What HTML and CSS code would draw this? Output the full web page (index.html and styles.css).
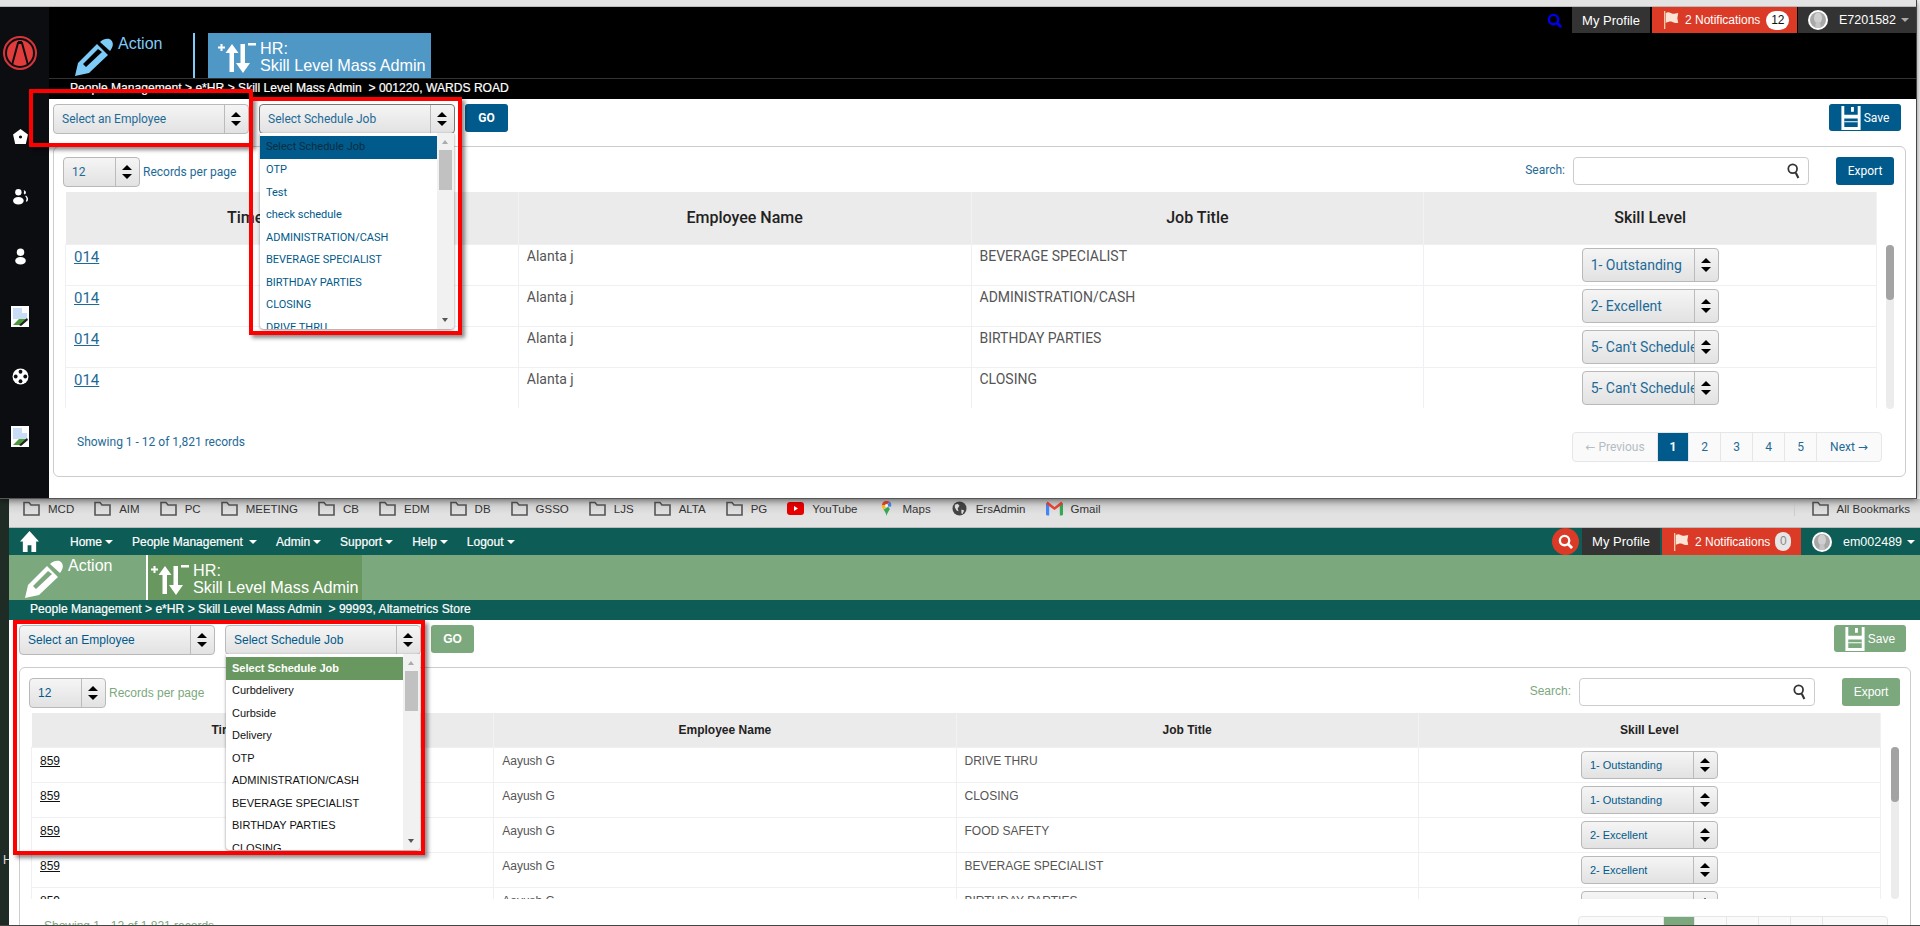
FILE: index.html
```html
<!DOCTYPE html>
<html lang="en">
<head>
    <meta charset="UTF-8">
    <meta name="viewport" content="width=device-width, initial-scale=1.0">
    <title>Skill Level Mass Admin</title>
    <link rel="stylesheet" href="styles.css">
</head>
<body>
    <!-- Shared icons -->
    <svg class="sprite" width="0" height="0">
        <symbol id="i-pencil" viewBox="0 0 38 38"><path fill-rule="evenodd" d="M0 38 3 25 22 6 33 17 14 35ZM8 26 11 29 27 14 23 11Z"/><path d="M25 4C29 0 34 0 36 2 39 5 38 9 35 13Z"/></symbol>
        <symbol id="i-updown" viewBox="0 0 38 30"><path d="M2.500 1h2v2.500H7v2H4.500V8h-2V5.500H0v-2h2.500ZM14 1l6.500 9H16v19h-4.500V10H7.500ZM22.500 1H27v19h5l-7 10-7-10h4.500ZM30 0h8v2.500h-8Z"/></symbol>
        <symbol id="i-floppy" viewBox="0 0 20 25"><path class="floppy-body" d="M0 0h20v25H0Z"/><path class="floppy-cut" d="M3 0h14v9H3ZM3 13h14v9H3Z"/><path class="floppy-body" d="M10 1h3v5h-3ZM3 16h14v1H3Z"/></symbol>
        <symbol id="i-flag" viewBox="0 0 18 20"><path fill="#f3c9a8" d="M0 0h1.500v20H0Z"/><path fill="#fbe3d6" d="M2 2c4-2 6 1 8 1s4-1 6-1l-1 6 1 5c-3 1-5 0-7-1s-4 0-7 1Z"/></symbol>
        <symbol id="i-avatar" viewBox="0 0 20 20"><circle cx="10" cy="10" r="10" fill="#fff"/><circle cx="10" cy="10" r="8" fill="#a8a8a8"/><ellipse cx="10" cy="8" rx="4" ry="5.500" fill="#cfcfcf"/><path fill="#c4c4c4" d="M8 12h4l1 6H7Z"/></symbol>
        <symbol id="i-folder" viewBox="0 0 17 15"><path fill="none" stroke="#555" stroke-width="1.600" d="M1 1.500h5l2 2.500h8v10H1Z"/></symbol>
        <symbol id="i-broken" viewBox="0 0 18 21"><path fill="#fff" d="M0 0h18v21H0Z"/><path fill="#c9ddf6" d="M2 2h9l5 5v6H2Z"/><path fill="#4c9a3a" d="M2 19l6-6h8l-5 6Z"/><path fill="#fff" d="M11 1 17 7h-6Z"/><path fill="#222" d="M16 12l1 2-7 6-2-1Z"/></symbol>
        <symbol id="i-lens" viewBox="0 0 16 18"><circle cx="6.500" cy="6.500" r="5" fill="none" stroke="currentColor" stroke-width="2"/><path fill="none" stroke="currentColor" stroke-width="2.400" d="M10 11l3 6"/></symbol>
    </svg>

    <!-- Top window: blue theme -->
    <div class="win-top">
        <div class="chrome-strip"></div>
        <div class="win-body">
            <div class="sidebar">
                <svg class="logo" viewBox="0 0 34 34"><circle cx="17" cy="17" r="16" fill="#0b0d11" stroke="#d8353a" stroke-width="2"/><circle cx="17" cy="17" r="13" fill="#e23c3c"/><path fill="none" stroke="#0b0d11" stroke-width="2" d="M9 29 15 7h4l6 22"/><path fill="#0b0d11" d="M15 5h4v3h-4Z"/></svg>
                <ul class="side-icons">
                    <li><svg viewBox="0 0 16 16"><path fill="#fff" fill-rule="evenodd" d="M8 1 15 6 13 15H3L1 6ZM8 7a1.500 1.500 0 1 0 .01 0Z"/></svg></li>
                    <li><svg viewBox="0 0 16 16"><circle cx="6" cy="4" r="3" fill="#fff"/><ellipse cx="6" cy="12" rx="5" ry="3.500" fill="#fff"/><path fill="#fff" d="M11 2c2 0 3 3 1 4l-1-1c.500-1 .500-2 0-3ZM13 7c2 1 3 4 1 6l-1-.500c1-2 1-3-.500-4.500Z"/></svg></li>
                    <li><svg viewBox="0 0 16 16"><circle cx="8" cy="4" r="3.500" fill="#fff"/><ellipse cx="8" cy="12" rx="5" ry="3.500" fill="#fff"/></svg></li>
                    <li><svg class="side-broken"><use href="#i-broken"/></svg></li>
                    <li><svg viewBox="0 0 16 16"><circle cx="8" cy="8" r="7.500" fill="#fff"/><circle cx="8" cy="3.500" r="1.800" fill="#0b0d11"/><circle cx="8" cy="12.500" r="1.800" fill="#0b0d11"/><circle cx="3.500" cy="8" r="1.800" fill="#0b0d11"/><circle cx="12.500" cy="8" r="1.800" fill="#0b0d11"/></svg></li>
                    <li><svg class="side-broken"><use href="#i-broken"/></svg></li>
                </ul>
            </div>
            <div class="main">
                <div class="head-top">
                    <div class="title-group">
                        <div class="action-box">
                            <svg class="pencil"><use href="#i-pencil"/></svg>
                            <span>Action</span>
                        </div>
                        <div class="hr-tile">
                            <svg class="updown"><use href="#i-updown"/></svg>
                            <div class="hr-text">HR:<br>Skill Level Mass Admin</div>
                        </div>
                    </div>
                    <div class="user-nav">
                        <span class="nav-search"><svg viewBox="0 0 16 16"><circle cx="7" cy="7" r="5" fill="none" stroke="currentColor" stroke-width="2.500"/><path stroke="currentColor" stroke-width="3" d="M10.500 10.500 15 15"/></svg></span>
                        <span class="nav-tab profile">My Profile</span>
                        <span class="nav-tab notif"><svg class="flag"><use href="#i-flag"/></svg>2 Notifications <b class="badge">12</b></span>
                        <span class="nav-tab user"><svg class="avatar"><use href="#i-avatar"/></svg>E7201582<i class="caret"></i></span>
                    </div>
                </div>
                <div class="crumb">People Management &gt; e*HR &gt; Skill Level Mass Admin &nbsp;&gt; 001220, WARDS ROAD</div>
                <div class="content">
                    <div class="filter-row">
                        <div class="sel sel-filter"><span>Select an Employee</span><i class="arrows"></i></div>
                        <div class="sel sel-filter sel-open">
                            <span>Select Schedule Job</span><i class="arrows"></i>
                            <div class="drop">
                                <ul class="drop-list">
                                    <li class="on">Select Schedule Job</li>
                                    <li>OTP</li>
                                    <li>Test</li>
                                    <li>check schedule</li>
                                    <li>ADMINISTRATION/CASH</li>
                                    <li>BEVERAGE SPECIALIST</li>
                                    <li>BIRTHDAY PARTIES</li>
                                    <li>CLOSING</li>
                                    <li>DRIVE THRU</li>
                                </ul>
                                <div class="drop-scroll"><i class="up"></i><b></b><i class="down"></i></div>
                            </div>
                        </div>
                        <span class="btn btn-go">GO</span>
                        <span class="btn btn-save"><svg class="floppy"><use href="#i-floppy"/></svg>Save</span>
                    </div>
                    <div class="card">
                        <div class="toolbar">
                            <div class="sel sel-small"><span>12</span><i class="arrows"></i></div>
                            <span class="per-page">Records per page</span>
                            <span class="search-label">Search:</span>
                            <div class="search-box"><svg class="lens"><use href="#i-lens"/></svg></div>
                            <span class="btn btn-export">Export</span>
                        </div>
                        <div class="table-row">
                            <div class="table-wrap">
                                <table class="grid">
                                    <thead><tr><th>Timecard Number</th><th>Employee Name</th><th>Job Title</th><th>Skill Level</th></tr></thead>
                                    <tbody>
                                        <tr><td><a href="#">014</a></td><td>Alanta j</td><td>BEVERAGE SPECIALIST</td><td class="skill"><div class="sel sel-skill"><span>1- Outstanding</span><i class="arrows"></i></div></td></tr>
                                        <tr><td><a href="#">014</a></td><td>Alanta j</td><td>ADMINISTRATION/CASH</td><td class="skill"><div class="sel sel-skill"><span>2- Excellent</span><i class="arrows"></i></div></td></tr>
                                        <tr><td><a href="#">014</a></td><td>Alanta j</td><td>BIRTHDAY PARTIES</td><td class="skill"><div class="sel sel-skill"><span>5- Can't Schedule</span><i class="arrows"></i></div></td></tr>
                                        <tr><td><a href="#">014</a></td><td>Alanta j</td><td>CLOSING</td><td class="skill"><div class="sel sel-skill"><span>5- Can't Schedule</span><i class="arrows"></i></div></td></tr>
                                    </tbody>
                                </table>
                            </div>
                            <div class="v-scroll"><b></b></div>
                        </div>
                        <div class="card-foot">
                            <span class="showing">Showing 1 - 12 of 1,821 records</span>
                            <ul class="pager">
                                <li class="off"><span class="arr">&larr;</span> Previous</li><li class="cur">1</li><li>2</li><li>3</li><li>4</li><li>5</li><li class="next">Next <span class="arr">&rarr;</span></li>
                            </ul>
                        </div>
                    </div>
                </div>
            </div>
        </div>
        <div class="red-box red-1"></div>
        <div class="red-box red-2"></div>
    </div>

    <!-- Bottom window: green theme -->
    <div class="win-bottom">
        <div class="desk-strip"><span>H</span></div>
        <div class="win-green">
            <div class="bookmarks">
                <span class="bm"><svg class="bm-ico"><use href="#i-folder"/></svg>MCD</span>
                <span class="bm"><svg class="bm-ico"><use href="#i-folder"/></svg>AIM</span>
                <span class="bm"><svg class="bm-ico"><use href="#i-folder"/></svg>PC</span>
                <span class="bm"><svg class="bm-ico"><use href="#i-folder"/></svg>MEETING</span>
                <span class="bm"><svg class="bm-ico"><use href="#i-folder"/></svg>CB</span>
                <span class="bm"><svg class="bm-ico"><use href="#i-folder"/></svg>EDM</span>
                <span class="bm"><svg class="bm-ico"><use href="#i-folder"/></svg>DB</span>
                <span class="bm"><svg class="bm-ico"><use href="#i-folder"/></svg>GSSO</span>
                <span class="bm"><svg class="bm-ico"><use href="#i-folder"/></svg>LJS</span>
                <span class="bm"><svg class="bm-ico"><use href="#i-folder"/></svg>ALTA</span>
                <span class="bm"><svg class="bm-ico"><use href="#i-folder"/></svg>PG</span>
                <span class="bm"><svg class="bm-ico" viewBox="0 0 17 15"><rect y="1" width="17" height="13" rx="3" fill="#e60000"/><path fill="#fff" d="M7 5l4 2.500L7 10Z"/></svg>YouTube</span>
                <span class="bm"><svg class="bm-ico" viewBox="0 0 17 18"><path fill="#ea4335" d="M8.500 0C5 0 3 2.500 3 5.500l5.500-1 4-3.500C11.500.400 10 0 8.500 0Z"/><path fill="#fbbc04" d="M3 5.500c0 2 1 3.500 2 5l4-5-1-1Z"/><path fill="#4285f4" d="M12.500 1 9 5.500l1 1 4 .500c.700-2.500 0-5-1.500-6Z"/><path fill="#34a853" d="M5 10.500c1.500 2 3 4 3.500 7.500.500-3 2.500-5.500 4-8.500l-2-2.500Z"/><circle cx="8.500" cy="5.500" r="1.800" fill="#fff"/></svg>Maps</span>
                <span class="bm"><svg class="bm-ico" viewBox="0 0 16 16"><circle cx="8" cy="8" r="7.500" fill="#444"/><path fill="#ddd" d="M3 4l3-1 2 2-2 3 1 3-2-1-2-3ZM10 9l3 1-2 4-1-1Z"/></svg>ErsAdmin</span>
                <span class="bm"><svg class="bm-ico" viewBox="0 0 16 13"><path fill="#4285f4" d="M0 2h3v11H1a1 1 0 0 1-1-1Z"/><path fill="#34a853" d="M13 2h3v10a1 1 0 0 1-1 1h-2Z"/><path fill="#ea4335" d="M0 2 1.500 0 8 5l6.500-5L16 2 8 8Z"/></svg>Gmail</span>
                <span class="bm bm-all"><svg class="bm-ico"><use href="#i-folder"/></svg>All Bookmarks</span>
            </div>
            <div class="menu-bar">
                <svg class="home-ico" viewBox="0 0 20 22"><path fill="#fff" d="M10 0 20 11h-3v11h-5v-7H8v7H3V11H0Z"/></svg>
                <ul class="menu">
                    <li>Home<i class="caret"></i></li>
                    <li>People Management <i class="caret"></i></li>
                    <li>Admin<i class="caret"></i></li>
                    <li>Support<i class="caret"></i></li>
                    <li>Help<i class="caret"></i></li>
                    <li>Logout<i class="caret"></i></li>
                </ul>
                <div class="user-nav">
                    <span class="nav-search"><svg viewBox="0 0 16 16"><circle cx="7" cy="7" r="5" fill="none" stroke="currentColor" stroke-width="2.500"/><path stroke="currentColor" stroke-width="3" d="M10.500 10.500 15 15"/></svg></span>
                    <span class="nav-tab profile">My Profile</span>
                    <span class="nav-tab notif"><svg class="flag"><use href="#i-flag"/></svg>2 Notifications <b class="badge">0</b></span>
                    <span class="nav-tab user"><svg class="avatar"><use href="#i-avatar"/></svg>em002489<i class="caret"></i></span>
                </div>
            </div>
            <div class="title-band">
                <div class="action-box">
                    <svg class="pencil"><use href="#i-pencil"/></svg>
                    <span>Action</span>
                </div>
                <div class="hr-tile">
                    <svg class="updown"><use href="#i-updown"/></svg>
                    <div class="hr-text">HR:<br>Skill Level Mass Admin</div>
                </div>
            </div>
            <div class="crumb">People Management &gt; e*HR &gt; Skill Level Mass Admin &nbsp;&gt; 99993, Altametrics Store</div>
            <div class="content">
                <div class="filter-row">
                    <div class="sel sel-filter"><span>Select an Employee</span><i class="arrows"></i></div>
                    <div class="sel sel-filter sel-open">
                        <span>Select Schedule Job</span><i class="arrows"></i>
                        <div class="drop">
                            <ul class="drop-list">
                                <li class="on">Select Schedule Job</li>
                                <li>Curbdelivery</li>
                                <li>Curbside</li>
                                <li>Delivery</li>
                                <li>OTP</li>
                                <li>ADMINISTRATION/CASH</li>
                                <li>BEVERAGE SPECIALIST</li>
                                <li>BIRTHDAY PARTIES</li>
                                <li>CLOSING</li>
                            </ul>
                            <div class="drop-scroll"><i class="up"></i><b></b><i class="down"></i></div>
                        </div>
                    </div>
                    <span class="btn btn-go">GO</span>
                    <span class="btn btn-save"><svg class="floppy"><use href="#i-floppy"/></svg>Save</span>
                </div>
                <div class="card">
                    <div class="toolbar">
                        <div class="sel sel-small"><span>12</span><i class="arrows"></i></div>
                        <span class="per-page">Records per page</span>
                        <span class="search-label">Search:</span>
                        <div class="search-box"><svg class="lens"><use href="#i-lens"/></svg></div>
                        <span class="btn btn-export">Export</span>
                    </div>
                    <div class="table-row">
                        <div class="table-wrap">
                            <table class="grid">
                                <thead><tr><th>Timecard Number</th><th>Employee Name</th><th>Job Title</th><th>Skill Level</th></tr></thead>
                                <tbody>
                                    <tr><td><a href="#">859</a></td><td>Aayush G</td><td>DRIVE THRU</td><td class="skill"><div class="sel sel-skill"><span>1- Outstanding</span><i class="arrows"></i></div></td></tr>
                                    <tr><td><a href="#">859</a></td><td>Aayush G</td><td>CLOSING</td><td class="skill"><div class="sel sel-skill"><span>1- Outstanding</span><i class="arrows"></i></div></td></tr>
                                    <tr><td><a href="#">859</a></td><td>Aayush G</td><td>FOOD SAFETY</td><td class="skill"><div class="sel sel-skill"><span>2- Excellent</span><i class="arrows"></i></div></td></tr>
                                    <tr><td><a href="#">859</a></td><td>Aayush G</td><td>BEVERAGE SPECIALIST</td><td class="skill"><div class="sel sel-skill"><span>2- Excellent</span><i class="arrows"></i></div></td></tr>
                                    <tr><td><a href="#">859</a></td><td>Aayush G</td><td>BIRTHDAY PARTIES</td><td class="skill"><div class="sel sel-skill"><span>2- Excellent</span><i class="arrows"></i></div></td></tr>
                                </tbody>
                            </table>
                        </div>
                        <div class="v-scroll"><b></b></div>
                    </div>
                    <div class="card-foot">
                        <span class="showing">Showing 1 - 12 of 1,821 records</span>
                        <ul class="pager">
                            <li class="off"><span class="arr">&larr;</span> Previous</li><li class="cur">1</li><li>2</li><li>3</li><li>4</li><li>5</li><li class="next">Next <span class="arr">&rarr;</span></li>
                        </ul>
                    </div>
                </div>
            </div>
            <div class="red-box red-3"></div>
        </div>
    </div>
</body>
</html>
```

FILE: styles.css
```css
/* Reset */
* {
    margin: 0;
    padding: 0;
    box-sizing: border-box;
}

body {
    width: 1920px;
    height: 926px;
    overflow: hidden;
    background: #fff;
    font-family: 'Liberation Sans', Arial, sans-serif;
}

ul {
    list-style: none;
}

.sprite {
    position: absolute;
}

/* Theme colours */
.win-top {
    --accent: #005a8b;
    --link: #1d6a97;
    --label: #1d6a97;
    --drop-text: #005a8b;
    --drop-on-text: #0c2d42;
    --tile: #4f98c6;
    --icon: #7fcbf7;
    --cell: #555;
    width: 1917px;
    height: 499px;
    position: relative;
    z-index: 2;
    border-right: 1px solid #444;
    border-bottom: 1px solid #555;
    box-shadow: 0 1px 7px rgba(0, 0, 0, .55);
    background: #fff;
}

.win-bottom {
    --accent: #7ba87d;
    --link: #111;
    --label: #7ba87d;
    --drop-text: #111;
    --drop-on-text: #fff;
    --tile: #68985f;
    --icon: #fff;
    --cell: #555;
    height: 427px;
    display: flex;
    overflow: hidden;
    border-bottom: 1px solid #444;
}

.chrome-strip {
    height: 7px;
    background: #e3e3e3;
    border-bottom: 1px solid #bbb;
}

.win-body {
    display: flex;
    height: 491px;
}

/* Sidebar */
.sidebar {
    width: 49px;
    flex-shrink: 0;
    background: #0b0d11;
    display: flex;
    flex-direction: column;
    align-items: center;
    padding-top: 29px;
}

.logo {
    width: 34px;
    height: 34px;
    margin-left: -9px;
}

.side-icons {
    margin-top: 56px;
    margin-left: -9px;
    display: flex;
    flex-direction: column;
    gap: 40px;
}

.side-icons li {
    height: 20px;
    display: flex;
    align-items: center;
    justify-content: center;
}

.side-icons svg {
    width: 17px;
    height: 17px;
}

.side-icons .side-broken {
    width: 18px;
    height: 21px;
}

.main {
    flex: 1;
    min-width: 0;
    display: flex;
    flex-direction: column;
}

/* Header */
.head-top {
    height: 72px;
    flex-shrink: 0;
    background: #000;
    border-bottom: 1px solid #333;
    display: flex;
    justify-content: space-between;
}

.title-group {
    margin-top: 26px;
    display: flex;
    height: 45px;
}

.action-box {
    width: 146px;
    height: 45px;
    padding-left: 26px;
    display: flex;
    color: var(--icon);
    font-size: 16px;
}

.win-top .action-box {
    border-right: 2px solid var(--icon);
}

.win-bottom .action-box {
    width: 139px;
    padding-left: 16px;
    border-right: 2px solid #fff;
}

.action-box span {
    margin: 2px 0 0 5px;
}

.pencil {
    width: 38px;
    height: 38px;
    margin-top: 5px;
    fill: var(--icon);
}

.hr-tile {
    margin-left: 13px;
    width: 223px;
    height: 45px;
    background: var(--tile);
    color: #fff;
    display: flex;
    padding: 10px 0 0 10px;
}

.win-bottom .hr-tile {
    margin-left: 0;
    width: 214px;
    padding-left: 3px;
}

.updown {
    width: 38px;
    height: 30px;
    flex-shrink: 0;
    fill: #fff;
}

.hr-text {
    margin: -3px 0 0 4px;
    font-size: 16.200px;
    line-height: 17px;
    white-space: nowrap;
}

/* User nav */
.user-nav {
    display: flex;
    height: 26px;
    align-items: stretch;
    color: #fff;
    font-size: 13px;
    white-space: nowrap;
}

.win-bottom .user-nav {
    margin-left: auto;
    height: 27px;
}

.nav-search {
    width: 32px;
    color: #0000f0;
    display: flex;
    align-items: center;
    justify-content: center;
}

.nav-search svg {
    width: 15px;
    height: 15px;
}

.win-bottom .nav-search {
    width: 27px;
    height: 27px;
    margin-right: 1px;
    border-radius: 50%;
    background: #db3a26;
    color: #fff;
}

.nav-tab {
    display: flex;
    align-items: center;
    margin-left: 2px;
}

.profile {
    width: 78px;
    justify-content: center;
    background: #333;
}

.notif {
    width: 145px;
    background: #db3a26;
    padding-left: 12px;
    font-size: 12px;
}

.win-bottom .notif {
    width: 139px;
}

.flag {
    width: 16px;
    height: 18px;
    margin-right: 5px;
}

.badge {
    margin-left: 6px;
    min-width: 23px;
    height: 19px;
    padding: 0 4px;
    border-radius: 10px;
    background: #fff;
    color: #111;
    font-weight: 400;
    font-size: 12px;
    line-height: 19px;
    text-align: center;
}

.win-bottom .badge {
    min-width: 16px;
    margin-left: 5px;
    padding: 0;
    background: #e6e6e6;
    color: #888;
}

.user {
    width: 118px;
    margin-left: 1px;
    background: #333;
    padding-left: 10px;
    font-size: 12.500px;
}

.win-bottom .user {
    background: transparent;
}

.avatar {
    width: 20px;
    height: 20px;
    margin-right: 11px;
}

.caret {
    display: inline-block;
    margin-left: 5px;
    border-top: 4px solid #aaa;
    border-left: 4px solid transparent;
    border-right: 4px solid transparent;
}

.win-bottom .caret {
    border-top-color: #fff;
}

/* Breadcrumb */
.crumb {
    height: 20px;
    flex-shrink: 0;
    color: #fff;
    background: #000;
    padding-left: 21px;
    font-size: 12.100px;
    line-height: 19px;
    -webkit-text-stroke: .2px #fff;
    white-space: pre;
}

.win-bottom .crumb {
    background: #0d5c55;
}

/* Content */
.content {
    flex: 1;
    background: #fff;
    padding: 5px 10px 0 4px;
}

.win-top .content {
    font-family: Roboto, 'Liberation Sans', sans-serif;
}

.win-bottom .content {
    flex-shrink: 0;
    padding: 5px 9px 0 10px;
}

.filter-row {
    display: flex;
    align-items: flex-start;
    height: 37px;
    margin-bottom: 5px;
}

.sel {
    display: flex;
    align-items: center;
    position: relative;
    height: 30px;
    border: 1px solid #b9b9b9;
    border-radius: 4px;
    background: linear-gradient(#f5f5f5, #e2e2e2);
    color: #1d6a97;
    font-size: 12px;
}

.win-bottom .sel {
    color: #005a8b;
}

.sel > span {
    flex: 1;
    min-width: 0;
    padding-left: 8px;
    white-space: nowrap;
    overflow: hidden;
}

.arrows {
    width: 24px;
    height: 100%;
    flex-shrink: 0;
    border-left: 1px solid #bbb;
    position: relative;
}

.arrows::before,
.arrows::after {
    content: "";
    position: absolute;
    left: 6px;
    border-left: 5px solid transparent;
    border-right: 5px solid transparent;
}

.arrows::before {
    top: calc(50% - 7px);
    border-bottom: 5px solid #000;
}

.arrows::after {
    bottom: calc(50% - 7px);
    border-top: 5px solid #000;
}

.sel-filter {
    width: 196px;
    margin-right: 10px;
}

.sel-open {
    border-color: #777;
    z-index: 3;
}

.win-bottom .sel-open {
    border-color: #bbb;
}

.sel-small {
    width: 77px;
}

.sel-skill {
    width: 137px;
    height: 34px;
    margin: 0 auto;
    font-size: 14px;
}

.win-bottom .sel-skill {
    height: 28px;
    font-size: 11px;
}

/* Open dropdown */
.drop {
    position: absolute;
    left: 0;
    top: 28px;
    width: 194px;
    height: 196px;
    background: #fff;
    border-radius: 0 0 4px 4px;
    box-shadow: 0 1px 3px rgba(0, 0, 0, .45);
    display: flex;
    overflow: hidden;
}

.drop-list {
    flex: 1;
    padding-top: 3px;
    color: var(--drop-text);
    font-size: 11px;
}

.drop-list li {
    height: 22.500px;
    line-height: 21px;
    padding-left: 6px;
}

.drop-list .on {
    height: 23px;
    line-height: 22.500px;
    background: var(--accent);
    color: var(--drop-on-text);
}

.win-bottom .drop-list .on {
    background: #68985f;
    font-weight: 700;
}

.drop-scroll {
    width: 17px;
    flex-shrink: 0;
    background: #f1f1f1;
    position: relative;
}

.drop-scroll b {
    position: absolute;
    top: 17px;
    left: 2px;
    width: 13px;
    height: 40px;
    background: #c1c1c1;
}

.drop-scroll i {
    position: absolute;
    left: 5px;
    border-left: 3.500px solid transparent;
    border-right: 3.500px solid transparent;
}

.drop-scroll .up {
    top: 7px;
    border-bottom: 4px solid #aaa;
}

.drop-scroll .down {
    bottom: 7px;
    border-top: 4px solid #555;
}

/* Buttons */
.btn {
    background: var(--accent);
    color: #fff;
    border-radius: 3px;
    font-size: 12px;
    display: flex;
    align-items: center;
    justify-content: center;
}

.btn-go {
    width: 43px;
    height: 28px;
    font-weight: 700;
}

.btn-save {
    width: 72px;
    height: 27px;
    margin-left: auto;
    margin-right: 5px;
    gap: 3px;
}

.floppy {
    width: 20px;
    height: 24px;
    fill: none;
}

.floppy-body {
    fill: #fff;
}

.floppy-cut {
    fill: var(--accent);
}

.btn-export {
    width: 58px;
    height: 28px;
}

/* Card */
.card {
    height: 331px;
    border: 1px solid #ccc;
    border-radius: 6px;
    padding: 10px 11px 0 9px;
}

.win-bottom .card {
    height: 300px;
    padding: 10px 10px 0 9px;
}

.toolbar {
    display: flex;
    align-items: flex-start;
    height: 35px;
}

.per-page {
    margin: 8px 0 0 3px;
    color: var(--label);
    font-size: 12px;
}

.search-label {
    margin: 6px 8px 0 auto;
    color: var(--label);
    font-size: 12px;
}

.search-box {
    width: 236px;
    height: 28px;
    margin-right: 27px;
    border: 1px solid #ccc;
    border-radius: 4px;
    display: flex;
    align-items: center;
    justify-content: flex-end;
    padding-right: 7px;
}

.lens {
    width: 14px;
    height: 18px;
    color: #333;
}

.table-row {
    display: flex;
    gap: 9px;
    margin-left: 2px;
}

.win-bottom .table-row {
    gap: 10px;
}

.table-wrap {
    width: 1812px;
    height: 216px;
    overflow: hidden;
}

.win-bottom .table-wrap {
    width: 1850px;
    height: 186px;
}

.grid {
    width: 100%;
    table-layout: fixed;
    border-collapse: collapse;
    font-size: 14px;
    color: var(--cell);
}

.grid th {
    height: 52px;
    background: #ebebeb;
    color: #222;
    font-size: 16px;
    font-weight: 500;
    border-right: 1px solid #f2f2f2;
}

.grid td {
    height: 41px;
    padding: 3px 8px 0;
    vertical-align: top;
    border: 1px solid #eef0f4;
}

.grid td a {
    color: var(--link);
    font-size: 15px;
}

.grid .skill {
    padding-top: 3px;
}

.win-bottom .grid {
    font-size: 12px;
}

.win-bottom .grid th {
    height: 34px;
    font-size: 12px;
    font-weight: 700;
}

.win-bottom .grid td {
    height: 35px;
    padding-top: 6px;
}

.win-bottom .grid td a {
    font-size: 12px;
}

.win-bottom .grid .skill {
    padding-top: 3px;
}

.v-scroll {
    width: 8px;
    height: 164px;
    margin-top: 53px;
    background: #ececec;
    border-radius: 4px;
}

.win-bottom .v-scroll {
    height: 152px;
    margin-top: 34px;
}

.v-scroll b {
    display: block;
    width: 8px;
    height: 55px;
    background: #a3a3a3;
    border-radius: 4px;
}

/* Footer of the card */
.card-foot {
    display: flex;
    justify-content: space-between;
    align-items: flex-start;
    margin-top: 23px;
    padding: 0 12px 0 14px;
}

.win-bottom .card-foot {
    margin-top: 17px;
    padding-left: 15px;
}

.showing {
    margin-top: 3px;
    color: var(--label);
    font-size: 12px;
}

.pager {
    display: flex;
    height: 30px;
    border: 1px solid #e4e6ea;
    border-radius: 4px;
    background: #fafafa;
    color: #1d6a97;
    font-size: 12px;
}

.pager li {
    width: 32px;
    line-height: 28px;
    text-align: center;
    border-right: 1px solid #e4e6ea;
    white-space: nowrap;
}

.pager .off {
    width: 85px;
    color: #b5bcc2;
}

.pager .cur {
    width: 31px;
    background: var(--accent);
    color: #fff;
    font-weight: 700;
}

.pager .next {
    width: 64px;
    border-right: 0;
}

.arr {
    font-family: 'DejaVu Sans', sans-serif;
}

/* Bottom window */
.desk-strip {
    width: 9px;
    flex-shrink: 0;
    background: #1f2b25;
    color: #ddd;
    font-size: 12px;
    padding-top: 354px;
    padding-left: 3px;
    overflow: hidden;
}

.win-green {
    flex: 1;
    min-width: 0;
    position: relative;
    display: flex;
    flex-direction: column;
}

.bookmarks {
    height: 29px;
    flex-shrink: 0;
    background: linear-gradient(#c9c9c9, #e2e2e2 55%);
    border-bottom: 1px solid #bbb;
    display: flex;
    align-items: center;
    padding: 0 0 9px 14px;
    color: #333;
    font-size: 11.500px;
}

.bm {
    display: flex;
    align-items: center;
    gap: 8px;
    margin-right: 20px;
}

.bm-ico {
    width: 17px;
    height: 15px;
}

.bm-all {
    margin: 0 10px 0 auto;
    padding-left: 17px;
    border-left: 1px solid #ccc;
}

.menu-bar {
    height: 27px;
    flex-shrink: 0;
    background: #0d5c55;
    display: flex;
    align-items: center;
    color: #fff;
}

.home-ico {
    width: 19px;
    height: 21px;
    margin-left: 11px;
}

.menu {
    display: flex;
    margin-left: 31px;
    font-size: 12px;
    -webkit-text-stroke: .2px #fff;
}

.menu .caret {
    margin-left: 3px;
    vertical-align: 2px;
}

.menu li {
    margin-right: 19px;
}

.title-band {
    height: 45px;
    flex-shrink: 0;
    background: #7ba87d;
    display: flex;
}

/* Annotation boxes drawn over the screenshot */
.red-box {
    position: absolute;
    border: 4px solid #f00;
    box-shadow: 3px 3px 4px rgba(0, 0, 0, .45);
    z-index: 5;
    pointer-events: none;
}

.red-1 {
    left: 29px;
    top: 89px;
    width: 224px;
    height: 58px;
}

.red-2 {
    left: 249px;
    top: 97px;
    width: 213px;
    height: 238px;
}

.red-3 {
    left: 4px;
    top: 121px;
    width: 412px;
    height: 235px;
}
```
